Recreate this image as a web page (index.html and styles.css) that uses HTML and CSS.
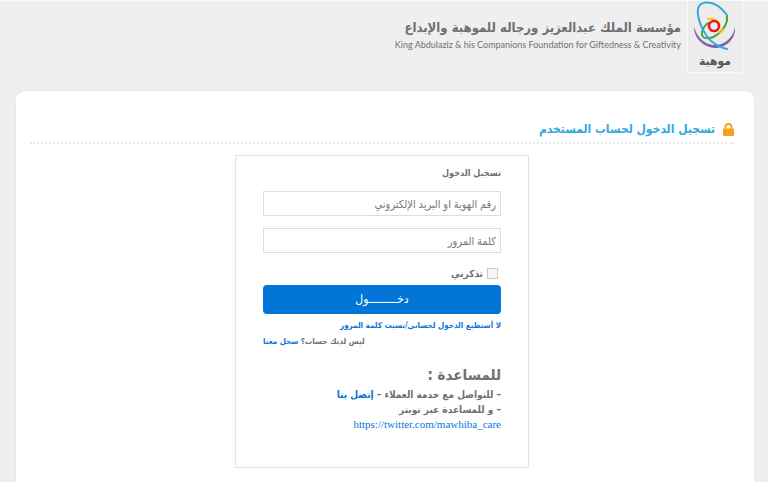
FILE: index.html
```html
<!DOCTYPE html>
<html lang="ar" dir="rtl">
<head>
    <meta charset="UTF-8">
    <meta name="viewport" content="width=device-width, initial-scale=1.0">
    <title>تسجيل الدخول</title>
    <link rel="stylesheet" href="styles.css">
</head>
<body>
    <header class="header">
        <div class="logo">
            <svg class="logo-mark" viewBox="0 0 44 50" fill="none" stroke-linecap="round" aria-hidden="true">
                <path d="M1 26C4 36 11 43 20 44C31 45 40 37 42 26C43 37 34 47 22 47C10 46 1 37 1 26Z" fill="#8160a8"/>
                <path d="M34 15C35 21 31 29 25 33C19 38 11 39 9 34C8 30 11 25 15 22" stroke="#45a735" stroke-width="2"/>
                <path d="M15 18C19 17 23 19 26 22M29 27C30 30 29 32 26 31" stroke="#fdc300" stroke-width="2"/>
                <circle cx="21" cy="25" r="5" stroke="#e31b2c" stroke-width="2.6"/>
                <path d="M34 14C28 6 20 1 13 1.5C6 2 4 7 5 14C6 22 11 33 18 40C23 44 28 47 34 48" stroke="#35a8e0" stroke-width="2"/>
            </svg>
            <span class="logo-name">موهبة</span>
        </div>
        <div class="org">
            <div class="org-ar">مؤسسة الملك عبدالعزيز ورجاله للموهبة والإبداع</div>
            <div class="org-en" dir="ltr">King Abdulaziz &amp; his Companions Foundation for Giftedness &amp; Creativity</div>
        </div>
    </header>

    <main class="card">
        <h1 class="page-title">
            <svg class="lock" viewBox="0 0 11 13" aria-hidden="true">
                <path d="M2.5 6V4a3 3 0 0 1 6 0v2" fill="none" stroke="#f7a21b" stroke-width="1.8"/>
                <rect x="0" y="5.5" width="11" height="7.5" rx="1" fill="#f7a21b"/>
            </svg>
            تسجيل الدخول لحساب المستخدم
        </h1>

        <form class="login">
            <h2 class="login-title">تسجيل الدخول</h2>
            <input class="field" type="text" aria-label="رقم الهوية او البريد الإلكتروني" placeholder="رقم الهوية او البريد الإلكتروني">
            <input class="field" type="password" aria-label="كلمة المرور" placeholder="كلمة المرور">
            <div class="remember">
                <input class="check" type="checkbox" id="remember">
                <label for="remember">تذكرني</label>
            </div>
            <button class="submit" type="submit">دخـــــــــول</button>
            <a class="forgot" href="#">لا أستطيع الدخول لحسابي/نسيت كلمة المرور</a>
            <p class="register">ليس لديك حساب؟ <a href="#">سجل معنا</a></p>

            <!-- Help -->
            <h3 class="help-title">للمساعدة :</h3>
            <p class="help">– للتواصل مع خدمة العملاء – <a href="#">إتصل بنا</a></p>
            <p class="help">– و للمساعدة عبر تويتر</p>
            <a class="twitter" dir="ltr" href="https://twitter.com/mawhiba_care">https://twitter.com/mawhiba_care</a>
        </form>
    </main>
</body>
</html>
```

FILE: styles.css
```css
* {
    box-sizing: border-box;
}

body {
    margin: 0;
    min-height: 100vh;
    display: flex;
    flex-direction: column;
    background: #efefef;
    border-top: 1px solid #fafafa;
    color: #707070;
    font-family: "DejaVu Sans Condensed", "DejaVu Sans", sans-serif;
    font-size: 10px;
    font-weight: bold;
}

h1, h2, h3, p {
    margin: 0;
}

a {
    color: #0b74d8;
    text-decoration: none;
}

/* Header */
.header {
    display: flex;
    align-items: flex-start;
    gap: 6px;
    padding: 0 25px 17px;
}

.logo {
    display: flex;
    flex-direction: column;
    align-items: center;
    width: 56px;
    height: 72px;
    background: #ececec;
    border: 1px solid #fafafa;
    border-top: 0;
    border-radius: 0 0 4px 4px;
}

.logo-mark {
    width: 44px;
    height: 50px;
}

.logo-name {
    font-size: 12px;
    line-height: 20px;
    color: #555;
}

.org {
    padding-top: 17px;
    color: #6e7073;
    white-space: nowrap;
}

.org-ar {
    font-size: 13px;
    line-height: 20px;
}

.org-en {
    font-family: Lato, sans-serif;
    font-size: 9px;
    font-weight: normal;
    line-height: 14px;
    text-align: right;
}

/* Main card */
.card {
    flex: 1;
    margin: 0 13px 0 15px;
    padding: 27px 20px 14px 14px;
    background: #fff;
    border: 1px solid #e9e9e9;
    border-bottom: 0;
    border-radius: 10px 10px 0 0;
}

.page-title {
    display: flex;
    align-items: center;
    gap: 8px;
    height: 26px;
    padding-bottom: 2px;
    border-bottom: 2px dotted #e6e6e6;
    color: #2fa9e0;
    font-size: 12px;
}

.lock {
    width: 11px;
    height: 13px;
}

/* Login box */
.login {
    display: flex;
    flex-direction: column;
    align-items: flex-start;
    max-width: 294px;
    min-height: 313px;
    margin: 11px auto 0;
    padding: 8px 27px 20px;
    border: 1px solid #e4e4e4;
}

.login-title {
    font-size: 9px;
    line-height: 18px;
    margin-bottom: 9px;
}

.field {
    width: 100%;
    height: 25px;
    margin-bottom: 12px;
    padding: 0 4px;
    border: 1px solid #ddd;
    background: #fff;
    color: #555;
    font-family: "Liberation Serif", "DejaVu Sans Condensed", serif;
    font-size: 11px;
}

.field::placeholder {
    color: #777;
}

.remember {
    display: flex;
    align-items: center;
    gap: 4px;
    height: 16px;
    margin-bottom: 4px;
    padding-right: 3px;
}

.check {
    appearance: none;
    width: 11px;
    height: 11px;
    margin: 0;
    border: 1px solid #c8c8c8;
    background: #f6f6f6;
}

.submit {
    width: 100%;
    height: 29px;
    padding: 0;
    border: 0;
    border-radius: 4px;
    background: #0275d8;
    color: #fff;
    font-family: "Liberation Serif", "DejaVu Sans Condensed", serif;
    font-size: 12px;
    cursor: pointer;
}

.forgot {
    margin-top: 4px;
    font-size: 8px;
    line-height: 16px;
}

.register {
    align-self: flex-end;
    font-size: 8px;
    line-height: 16px;
}

.help-title {
    margin-top: 13px;
    font-size: 15px;
    line-height: 24px;
}

.help {
    font-size: 10px;
    line-height: 15px;
}

.twitter {
    font-family: "Liberation Serif", serif;
    font-size: 11px;
    font-weight: normal;
    line-height: 15px;
}
```
